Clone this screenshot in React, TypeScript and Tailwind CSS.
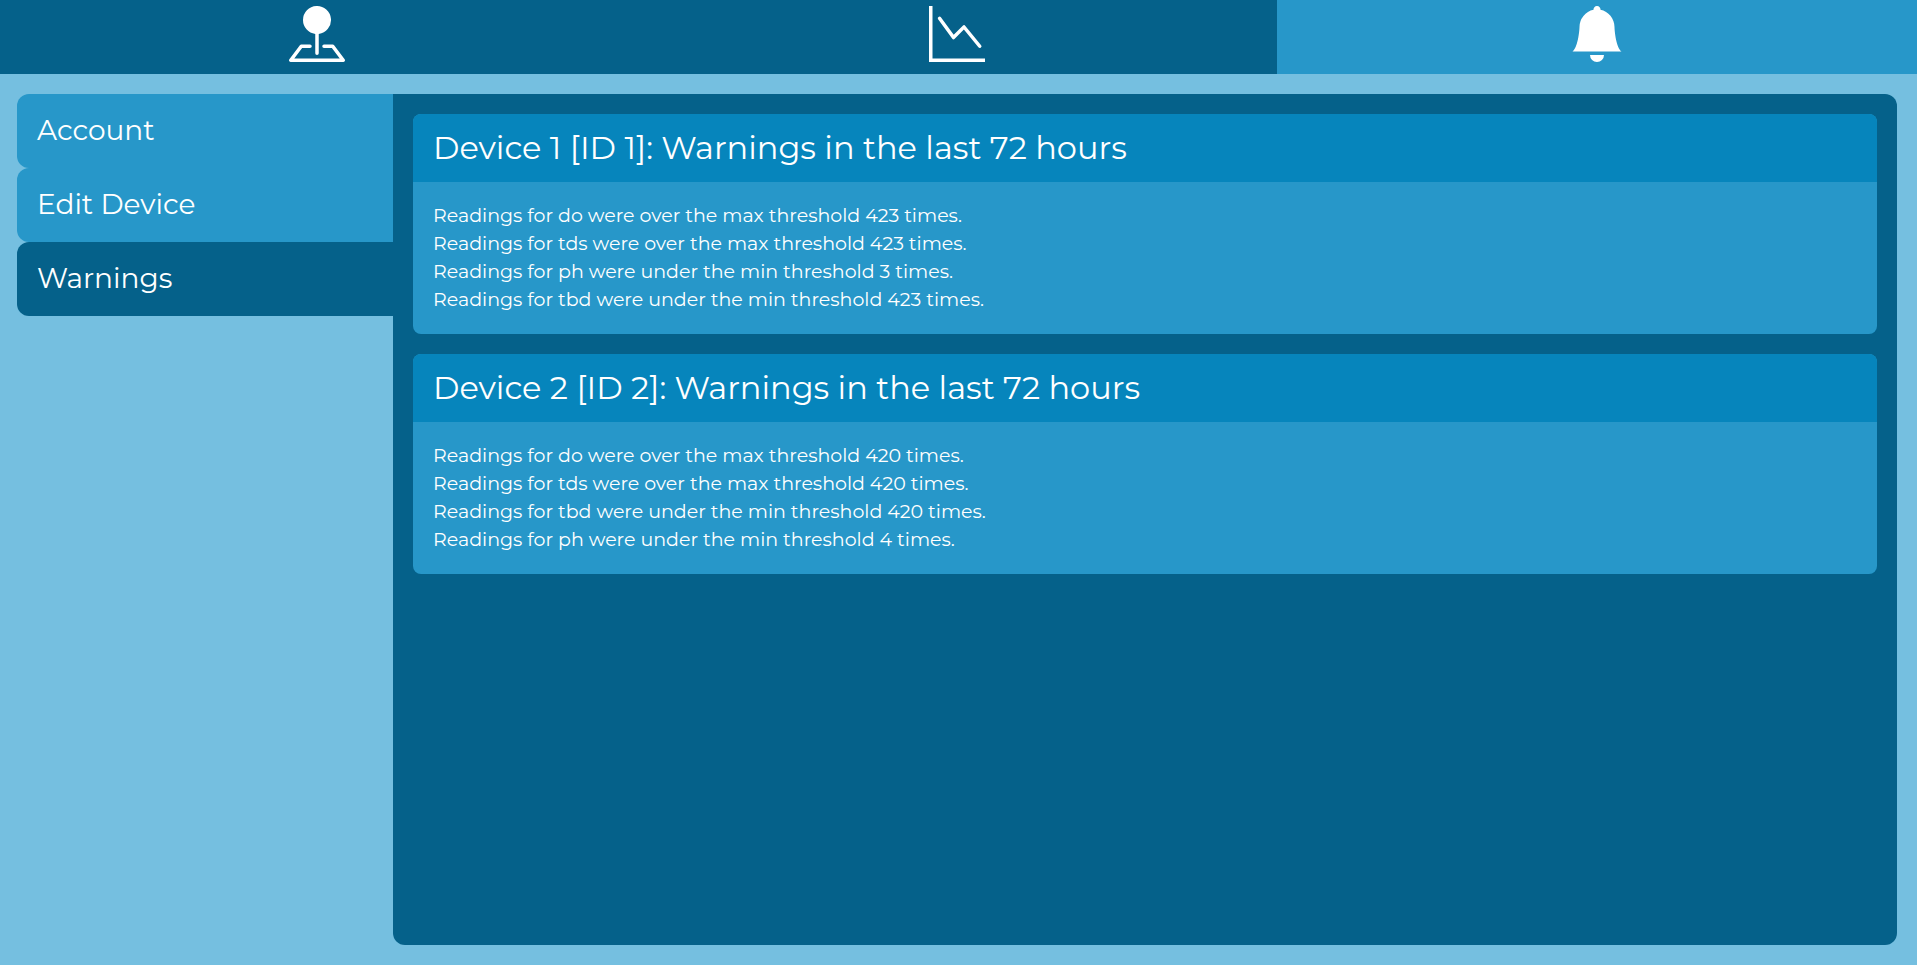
import { BsPinMapFill, BsGraphDown, BsBellFill } from "react-icons/bs";

const navItems = [
  { label: "Map", Icon: BsPinMapFill, active: false },
  { label: "Graphs", Icon: BsGraphDown, active: false },
  { label: "Notifications", Icon: BsBellFill, active: true },
];

const tabs = [
  { label: "Account", active: false },
  { label: "Edit Device", active: false },
  { label: "Warnings", active: true },
];

const devices = [
  {
    title: "Device 1 [ID 1]: Warnings in the last 72 hours",
    warnings: [
      "Readings for do were over the max threshold 423 times.",
      "Readings for tds were over the max threshold 423 times.",
      "Readings for ph were under the min threshold 3 times.",
      "Readings for tbd were under the min threshold 423 times.",
    ],
  },
  {
    title: "Device 2 [ID 2]: Warnings in the last 72 hours",
    warnings: [
      "Readings for do were over the max threshold 420 times.",
      "Readings for tds were over the max threshold 420 times.",
      "Readings for tbd were under the min threshold 420 times.",
      "Readings for ph were under the min threshold 4 times.",
    ],
  },
];

export default function App() {
  return (
    <div className="flex min-h-screen flex-col bg-[#75bfe0] font-[Montserrat,Inter,sans-serif] text-white">
      <nav className="-ml-[3px] grid grid-cols-3 bg-[#05618a]">
        {navItems.map(({ label, Icon, active }) => (
          <a
            key={label}
            href="#"
            aria-label={label}
            className={`flex justify-center pt-1.5 pb-3 ${active ? "bg-[#2797c9]" : "bg-[#05618a]"}`}
          >
            <Icon className="size-14" />
          </a>
        ))}
      </nav>
      <main className="flex flex-1 py-5 pr-5 pl-[17px]">
        <div className="flex w-1/5 shrink-0 flex-col">
          {tabs.map((tab) => (
            <button
              key={tab.label}
              type="button"
              className={`rounded-l-xl px-5 pt-[15px] pb-[17px] text-left text-[28px] leading-[42px] ${tab.active ? "bg-[#05618a]" : "bg-[#2797c9]"}`}
            >
              {tab.label}
            </button>
          ))}
        </div>
        <div className="flex flex-1 flex-col gap-5 rounded-r-xl rounded-bl-xl bg-[#05618a] p-5">
          {devices.map((device) => (
            <section key={device.title} className="overflow-hidden rounded-lg bg-[#2797c9]">
              <h2 className="bg-[#0685bc] px-5 py-3.5 text-[32px] leading-10">{device.title}</h2>
              <ul className="p-5 text-[19px] leading-7">
                {device.warnings.map((warning) => (
                  <li key={warning}>{warning}</li>
                ))}
              </ul>
            </section>
          ))}
        </div>
      </main>
    </div>
  );
}
